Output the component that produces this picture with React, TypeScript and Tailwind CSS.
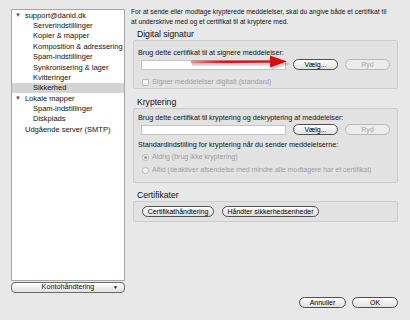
import React from "react";

const accountItems = [
  "Serverindstillinger",
  "Kopier & mapper",
  "Komposition & adressering",
  "Spam-indstillinger",
  "Synkronisering & lager",
  "Kvitteringer",
  "Sikkerhed",
];

function Pill({
  label,
  width,
  disabled,
}: {
  label: string;
  width: string;
  disabled?: boolean;
}) {
  return (
    <div
      className={`${width} h-[11px] rounded-full border flex items-center justify-center text-[7px] leading-none ${
        disabled
          ? "border-[#b8b8b8] bg-[#ececec] text-[#a8a8a8]"
          : "border-[#4e4e4e] bg-gradient-to-b from-white to-[#e0e0e0] text-black"
      }`}
    >
      {label}
    </div>
  );
}

function Radio({ label, checked }: { label: string; checked?: boolean }) {
  return (
    <div className="flex items-center gap-[3px] h-[13px] text-[#a0a0a0]">
      <div className="w-[7px] h-[7px] rounded-full border border-[#b8b8b8] bg-[#f4f4f4] flex items-center justify-center">
        {checked && <div className="w-[3px] h-[3px] rounded-full bg-[#9a9a9a]" />}
      </div>
      <span>{label}</span>
    </div>
  );
}

export default function App() {
  return (
    <div className="relative w-[410px] h-[320px] bg-[#e8e8e8] flex font-['Liberation_Sans',Arial,sans-serif] text-[7.2px] text-[#111]">
      {/* Sidebar */}
      <div className="w-[127px] pl-[11px] pt-[9px] flex flex-col">
        <div className="w-[114px] h-[272px] bg-white border border-[#a6a6a6] text-[7.5px] whitespace-nowrap">
          <div className="h-[10.4px] flex items-center pl-[3px] gap-[4px]">
            <span className="text-[6px] text-[#555]">▼</span>
            <span>support@danid.dk</span>
          </div>
          {accountItems.map((item) => (
            <div
              key={item}
              className={`h-[10.4px] flex items-center pl-[21px] ${
                item === "Sikkerhed" ? "bg-[#d4d4d4]" : ""
              }`}
            >
              {item}
            </div>
          ))}
          <div className="h-[10.4px] flex items-center pl-[3px] gap-[4px]">
            <span className="text-[6px] text-[#555]">▼</span>
            <span>Lokale mapper</span>
          </div>
          <div className="h-[10.4px] flex items-center pl-[21px]">Spam-indstillinger</div>
          <div className="h-[10.4px] flex items-center pl-[21px]">Diskplads</div>
          <div className="h-[10.4px] flex items-center pl-[13px]">Udgående server (SMTP)</div>
        </div>
        <div className="mt-[1px] w-[114px] h-[11px] rounded-[4px] border border-[#6a6a6a] bg-gradient-to-b from-white to-[#e0e0e0] flex items-center relative">
          <span className="flex-1 text-center">Kontohåndtering</span>
          <span className="absolute right-[6px] text-[5px]">▼</span>
        </div>
      </div>

      {/* Main */}
      <div className="flex-1 pl-[4px] pr-[12px] pt-[7px] flex flex-col">
        <p className="leading-[10px] text-[6.7px]">
          For at sende eller modtage krypterede meddelelser, skal du angive både et certifikat til
          <br />
          at underskrive med og et certifikat til at kryptere med.
        </p>

        <div className="mt-[1px] ml-[6px] h-[12px] flex items-center text-[8.6px]">Digital signatur</div>
        <div className="ml-[2px] h-[49px] bg-[#e2e2e2] border border-[#cdcdcd] rounded-[2px] pl-[4px] pt-[7px]">
          <div className="leading-[10px]">Brug dette certifikat til at signere meddelelser:</div>
          <div className="flex items-center mt-[1px] ml-[3px]">
            <div className="w-[145px] h-[10px] bg-white border border-[#c4c4c4]" />
            <div className="ml-[7px]">
              <Pill label="Vælg..." width="w-[45px]" />
            </div>
            <div className="ml-[7px]">
              <Pill label="Ryd" width="w-[45px]" disabled />
            </div>
          </div>
          <div className="flex items-center gap-[3px] mt-[7px] ml-[4px] text-[#a0a0a0]">
            <div className="w-[7px] h-[7px] border border-[#bdbdbd] bg-[#f2f2f2] rounded-[1px]" />
            <span>Signer meddelelser digitalt (standard)</span>
          </div>
        </div>

        <div className="mt-[7px] ml-[6px] h-[12px] flex items-center text-[8.6px]">Kryptering</div>
        <div className="ml-[2px] h-[75px] bg-[#e2e2e2] border border-[#cdcdcd] rounded-[2px] pl-[4px] pt-[4px]">
          <div className="leading-[10px]">Brug dette certifikat til kryptering og dekryptering af meddelelser:</div>
          <div className="flex items-center mt-[1px] ml-[3px]">
            <div className="w-[145px] h-[10px] bg-white border border-[#c4c4c4]" />
            <div className="ml-[7px]">
              <Pill label="Vælg..." width="w-[45px]" />
            </div>
            <div className="ml-[7px]">
              <Pill label="Ryd" width="w-[45px]" disabled />
            </div>
          </div>
          <div className="leading-[10px] mt-[5px]">Standardindstilling for kryptering når du sender meddelelserne:</div>
          <div className="ml-[4px] mt-[1px] text-[7px]">
            <Radio label="Aldrig (brug ikke kryptering)" checked />
            <Radio label="Altid (deaktiver afsendelse med mindre alle modtagere har et certifikat)" />
          </div>
        </div>

        <div className="mt-[6px] ml-[6px] h-[12px] flex items-center text-[8.6px]">Certifikater</div>
        <div className="ml-[2px] h-[21px] bg-[#e2e2e2] border border-[#cdcdcd] rounded-[2px] pl-[8px] flex items-center gap-[8px]">
          <Pill label="Certifikathåndtering" width="w-[72px]" />
          <Pill label="Håndter sikkerhedsenheder" width="w-[97px]" />
        </div>

        <div className="mt-auto mb-[12px] flex justify-end gap-[6px]">
          <Pill label="Annuller" width="w-[47px]" />
          <Pill label="OK" width="w-[46px]" />
        </div>
      </div>

      {/* Red arrow overlay */}
      <svg className="absolute left-[190px] top-[54px]" width="102" height="17" viewBox="0 0 102 17">
        <defs>
          <linearGradient id="arr" x1="0" x2="1" y1="0" y2="0">
            <stop offset="0" stopColor="#e02020" stopOpacity="0.5" />
            <stop offset="0.3" stopColor="#e41616" />
            <stop offset="1" stopColor="#d40d0d" />
          </linearGradient>
        </defs>
        <path d="M2 9 L82 9 L82 4.5 L100 10 L82 15.5 L82 11.5 L2 11.5 Z" fill="#00000030" />
        <path d="M1 6.6 L80 6.4 L80 1.5 L97 7.6 L80 13.5 L80 8.8 L1 9.2 Z" fill="url(#arr)" />
      </svg>
    </div>
  );
}
